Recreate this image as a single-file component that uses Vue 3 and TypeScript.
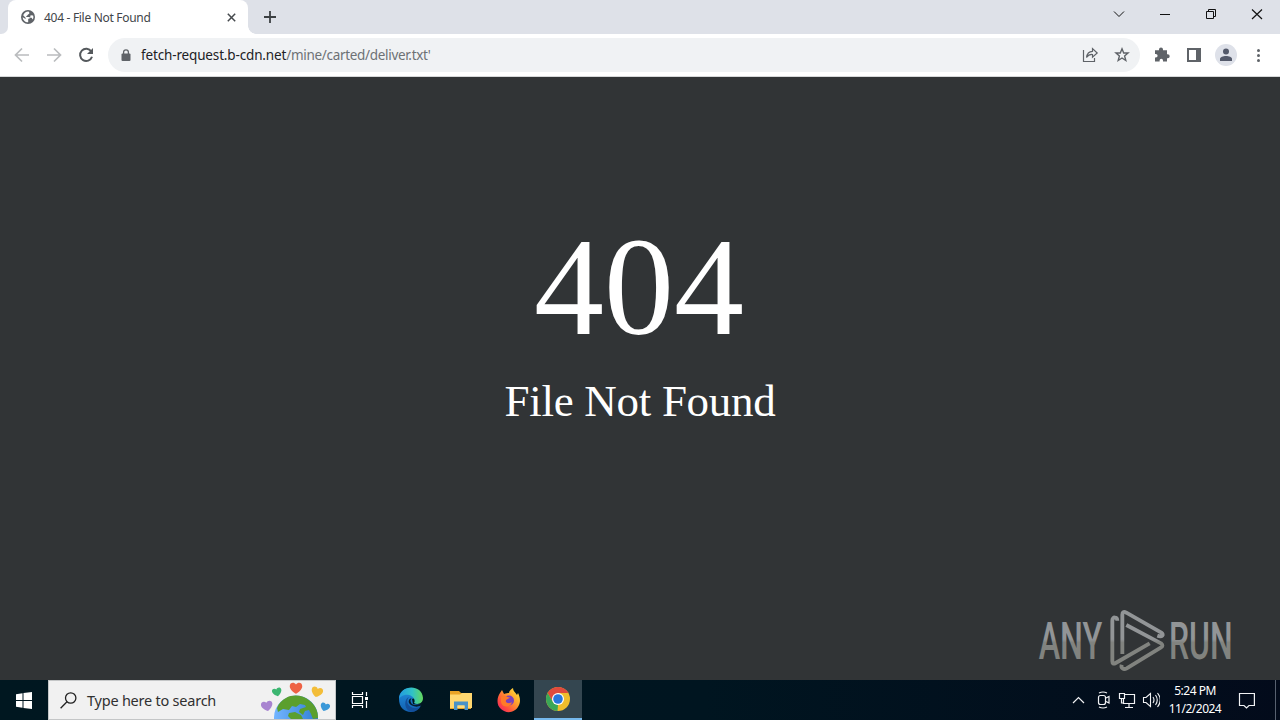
<script setup lang="ts">
interface Heart { x: number; y: number; r: number; s: number; c: string }
const title = '404 - File Not Found'
const hearts: Heart[] = [
  { x: 12, y: 28, r: -12, s: 1.15, c: '#a884d0' },
  { x: 22, y: 14, r: -14, s: 0.95, c: '#3cb671' },
  { x: 41, y: 10, r: 0, s: 1.25, c: '#ee6245' },
  { x: 62, y: 14, r: 14, s: 1.15, c: '#f3bd38' },
  { x: 70, y: 29, r: 18, s: 0.95, c: '#3b98d8' },
]
</script>

<template>
  <div class="screen">
    <header class="tabs">
      <div class="edge"></div>
      <div class="tab">
        <svg class="globe" width="14" height="14" viewBox="0 0 14 14">
          <circle cx="7" cy="7" r="7" fill="#5f6368" />
          <path d="M7.500 1.600C9 3 8.600 4.200 7 4.500 6.600 5.800 5 5.600 5.200 7H8.500C9.300 7.800 8.700 8.800 7.200 8.800V12.300C4 12.200 1.800 10 1.700 7.200L4.200 8.800 5 8.300 2.200 5.300C3.100 3 5 1.800 7.500 1.600ZM9.600 5.300 12.100 5.600C12.600 7 12.400 8.600 11.800 9.500L10.600 7.700H9Z" fill="#fff" />
        </svg>
        <span class="title">{{ title }}</span>
        <svg class="close" width="9" height="9" viewBox="0 0 9 9"><path d="M.8.8 8.200 8.200M8.200.8.8 8.200" stroke="#45494d" stroke-width="1.500" /></svg>
      </div>
      <div class="newtab"><svg width="12" height="12" viewBox="0 0 12 12"><path d="M6 0V12M0 6H12" stroke="#3c4043" stroke-width="1.800" /></svg></div>
      <div class="winbtns">
        <svg width="184" height="34" viewBox="0 0 184 34" fill="none" stroke="#111" stroke-width="1">
          <path d="M18 11.500 23 16.500 28 11.500" />
          <path d="M64 14.500H74" />
          <path d="M110.500 11.500H117.500V18.500H110.500ZM112.500 11V9.500H119.500V16.500H118" />
          <path d="M156 9.500 166 19M166 9.500 156 19" stroke-width="1.200" />
        </svg>
      </div>
    </header>
    <div class="toolbar">
      <svg class="nav" width="108" height="42" viewBox="0 0 108 42" fill="none" stroke="#babcbe" stroke-width="1.700">
        <path d="M29 21H16M22 14.500 15.500 21 22 27.500" />
        <path d="M47 21H60M54 14.500 60.500 21 54 27.500" />
        <path d="M91.300 17.500A6.100 6.100 0 1 0 92 22.800" stroke="#54585c" stroke-width="2" />
        <path d="M93 14V20H87Z" fill="#54585c" stroke="none" />
      </svg>
      <div class="omni">
        <svg class="lock" width="10" height="13" viewBox="0 0 10 13"><rect x=".5" y="4.500" width="9" height="7.500" rx="1" fill="#5f6368" /><path d="M2.600 5V3.300a2.400 2.400 0 0 1 4.800 0V5" fill="none" stroke="#5f6368" stroke-width="1.300" /></svg>
        <span class="url"><b>fetch-request.b-cdn.net</b><i>/mine/carted/deliver.txt'</i></span>
        <svg class="acts" width="60" height="34" viewBox="0 0 60 34" fill="none" stroke="#5f6368" stroke-width="1.200">
          <path d="M3.500 12V23.500H14.500V20" />
          <path d="M6.500 19.500C7 15.500 9 13.500 12.500 13.300V10.600L17.200 15 12.500 19.200V16.500C10 16.300 8 17.300 6.500 19.500Z" />
          <path d="M42 10.800 43.700 15H48L44.600 17.900 45.800 22.500 42 20 38.200 22.500 39.400 17.900 36 15H40.300Z" stroke-width="1.400" />
        </svg>
      </div>
      <svg class="right" width="140" height="42" viewBox="0 0 140 42">
        <path d="M15 17h4v-.8a2 2 0 0 1 4 0V17h4v4h.7a2 2 0 0 1 0 4H27v3.200h-4v-1a1.700 1.700 0 0 0-3.400 0v1H15v-4h.8a1.800 1.800 0 0 0 0-3.600H15Z" transform="translate(0 -.700)" fill="#5f6368" />
        <path d="M47 14H61V28H47ZM49 16V26H56V16Z" fill="#5f6368" fill-rule="evenodd" />
        <circle cx="86" cy="21" r="11" fill="#dee1e9" /><circle cx="86" cy="17.500" r="3" fill="#53596a" />
        <path d="M80 27V25c0-2 3-3 6-3s6 1 6 3v2Z" fill="#53596a" />
        <g fill="#5f6368"><circle cx="118.500" cy="16.500" r="1.500" /><circle cx="118.500" cy="21.500" r="1.500" /><circle cx="118.500" cy="26.500" r="1.500" /></g>
      </svg>
    </div>
    <main class="page">
      <h1>404</h1>
      <h2>File Not Found</h2>
      <svg class="mark" width="230" height="80" viewBox="0 0 690 240">
        <defs>
          <linearGradient id="mg" x1="0" y1="0" x2="0" y2="240" gradientUnits="userSpaceOnUse"><stop offset=".49" stop-color="#929597" /><stop offset=".53" stop-color="#81837f" /></linearGradient>
          <linearGradient id="mt" x1="0" y1="-178" x2="0" y2="62" gradientUnits="userSpaceOnUse"><stop offset=".49" stop-color="#929597" /><stop offset=".53" stop-color="#81837f" /></linearGradient>
        </defs>
        <g fill="url(#mt)" font-family="Roboto, sans-serif" font-size="154" font-weight="500">
          <text transform="translate(56 178) scale(.64 1)" textLength="298" lengthAdjust="spacingAndGlyphs">ANY</text>
          <text transform="translate(447 178) scale(.6 1)" textLength="318" lengthAdjust="spacingAndGlyphs">RUN</text>
        </g>
        <g fill="none" stroke="url(#mg)" stroke-width="11.500" stroke-linejoin="round">
          <path d="M292 62C292 50 277 49 277 62V184Q277 195 287 189L389 130" />
          <path d="M307 162V44Q307 32 319 38L424 98C433 104 427 112 412 107" />
          <path d="M319 75 423 130Q432 137 422 143L320 205C311 210 302 205 305 194" />
        </g>
      </svg>
    </main>
    <footer class="taskbar">
      <div class="start"><svg width="16" height="17" viewBox="0 0 16 17" fill="#fff"><path d="M0 2.300 6.500 1.300V8H0ZM7.500 1.100 16 0V8H7.500ZM0 9H6.500V15.700L0 14.700ZM7.500 9H16V17L7.500 15.900Z" /></svg></div>
      <div class="search">
        <svg class="mag" width="17" height="17" viewBox="0 0 17 17" fill="none" stroke="#222" stroke-width="1.300"><circle cx="10.700" cy="6" r="5.200" /><path d="M7 9.800.6 16.200" /></svg>
        <span class="ph">Type here to search</span>
        <svg class="art" width="80" height="38" viewBox="0 3 80 38">
          <defs><linearGradient id="eg"><stop stop-color="#73b5ff" /><stop offset="1" stop-color="#317fd5" /></linearGradient></defs>
          <circle cx="41" cy="39.500" r="22" fill="url(#eg)" />
          <path d="M31 20C38 16 48 17 55 23 61 28 63 34 63 40L58 41 56 36 54 32 50 33 48 37 44 34 45 31 51 29 50 27 45 26 41 29 37 28 34 32 28 31 23 34 22 30C24 25 27 22 31 20ZM34 35 40 34 46 37 48 41H36L33 38Z" fill="#5b9f2d" />
          <path v-for="h in hearts" :key="h.c" d="M0 4.500C-2 3.500-5 1-5-1.500-5-4.500-1.500-5 0-2.800 1.500-5 5-4.500 5-1.500 5 1 2 3.500 0 4.500Z" :fill="h.c" :transform="`translate(${h.x} ${h.y}) rotate(${h.r}) scale(${h.s})`" />
        </svg>
      </div>
      <div class="app view"><svg width="18" height="18" viewBox="0 0 18 18" fill="none" stroke="#fff" stroke-width="1.200"><path d="M1.500 1V3.500H11.500V1M1.500 17V14.500H11.500V17M1.500 5.500H11.500V12.500H1.500ZM15.500 1V5M15.500 10V17" /><path d="M14 6H17V9H14Z" fill="#fff" stroke="none" /></svg></div>
      <div class="app edgeapp"><svg width="26" height="26" viewBox="0 0 26 26">
        <defs>
          <linearGradient id="e1"><stop stop-color="#229ae0" /><stop offset=".55" stop-color="#30c1c7" /><stop offset="1" stop-color="#64d95c" /></linearGradient>
          <linearGradient id="e2" x1="0" y1="0" x2="0" y2="1"><stop stop-color="#2290df" /><stop offset="1" stop-color="#1260b0" /></linearGradient>
        </defs>
        <path d="M1 12C1 5 6 1 13 1L20 10 14 12 15 17 23 18C21 22 17 25 13 25 6 25 1 20 1 12Z" fill="url(#e2)" />
        <path d="M1 12C2-3 24-3 25 11 25 17 19 18 16 16 18 13 15 9 11 8 6 7 2 10 1 12Z" fill="url(#e1)" />
        <path d="M11 10C7 14 10 21 17 21 20 21 22 20 23 19 20 24 15 26 11 24 6 21 6 12 11 10Z" fill="#134f9b" />
        <path d="M14 11.500C12 12 12 15 14 17 17 19 22 18 23.500 16.500L23.500 18.500C18 21 13 19 11 16 10 13 12 11 14 11.500Z" fill="#071a2a" />
      </svg></div>
      <div class="app files"><svg width="22" height="20" viewBox="0 0 22 20"><path d="M0 1H9L11 3H21V19H0Z" fill="#e9a325" /><path d="M0 4.500H10L12 3H22V18H0Z" fill="#ffd76f" /><path d="M4 11.500H18V20H14.500V15.500H7.500V20H4Z" fill="#4892c8" /><path d="M7.500 15.500H14.500V18H7.500Z" fill="#ffdc7c" /></svg></div>
      <div class="app fox"><svg width="24" height="25" viewBox="0 0 24 25">
        <defs><linearGradient id="ff" x1="1" y1="0" x2="0" y2="1"><stop stop-color="#fff13e" /><stop offset=".38" stop-color="#ffa32d" /><stop offset=".7" stop-color="#ff503d" /><stop offset="1" stop-color="#ed176f" /></linearGradient></defs>
        <path d="M3 5 5 2 7 6C9 5 11 5 12 5 12 3 14 1 16 0 16 3 18 4 20 7L21 5C23 9 24 14 21.500 18 18 25 9 26 4 21-1 17 0 9 3 5Z" fill="url(#ff)" />
        <circle cx="12" cy="12.500" r="5" fill="#7941bd" /><path d="M4 9C8 6 9 9 13 9.500 12 11 8 11 9 14 11 16 14 15 15 14 14 20 5 20 4 14Z" fill="#ff7a28" />
      </svg></div>
      <div class="app active"><svg width="24" height="24" viewBox="0 0 24 24"><circle cx="12" cy="12" r="12" fill="#efbd2c" /><path d="M1.600 6A12 12 0 0 1 22.400 6H12L7 15Z" fill="#df4a3d" /><path d="M1.600 6 7 15 12 18 11.500 24A12 12 0 0 1 1.600 6Z" fill="#3aa757" /><circle cx="12" cy="12" r="6" fill="#fff" /><circle cx="12" cy="12" r="4.800" fill="#2876dc" /></svg></div>
      <div class="tray">
        <svg width="96" height="40" viewBox="0 0 96 40" fill="none" stroke="#f1f2f4" stroke-width="1.200">
          <path d="M9 23 14.500 17.500 20 23" />
          <rect x="34.500" y="15.500" width="7" height="9" rx="2" /><path d="M42 18 45 16.500V23L42 21.500M35 13Q39 11 43 13M35 27Q39 29 43 27" />
          <path d="M61 14.500H70.500V23.500H59.500V19M65 24V27M61 27.500H69M55.500 13.500H60.500V18.500H55.500ZM57.500 19V23H60" />
          <path d="M79.500 17.500H82L86.500 13.500V26.500L82 22.500H79.500ZM89 17Q91 20 89 23M91.500 15Q95 20 91.500 25M93.500 13Q99 20 93.500 27" stroke-width="1.100" />
        </svg>
      </div>
      <div class="clock"><span class="time">5:24 PM</span><span class="date">11/2/2024</span></div>
      <svg class="note" width="17" height="17" viewBox="0 0 17 17" fill="none" stroke="#f1f2f4" stroke-width="1.200"><path d="M1.500 1.500H16.400V13.500H11L8.500 16 6 13.500H1.500Z" /></svg>
      <div class="desk"></div>
    </footer>
  </div>
</template>

<style>
body { overflow: hidden; }
</style>

<style scoped>
.screen { width: 1280px; height: 720px; display: flex; flex-direction: column; font-family: "Noto Sans", "Open Sans", sans-serif; background: #313436; overflow: hidden; }
svg { display: block; flex: none; }
.tabs { height: 34px; display: flex; background: #dee1e8; flex: none; }
.edge { width: 8px; background: #fff; flex: none; }
.edge::before { content: ""; display: block; height: 34px; background: #dee1e8; border-bottom-right-radius: 7px; }
.tab { width: 240px; box-sizing: border-box; background: #fff; border-radius: 8px 8px 0 0; display: flex; align-items: center; padding: 0 12px 0 13px; }
.title { margin-left: 9px; font-size: 12px; color: #414549; letter-spacing: -.3px; white-space: nowrap; flex: 1; }
.newtab { flex: 1; display: flex; align-items: center; padding-left: 16px; background: radial-gradient(circle at 8px 0, transparent 7.5px, #fff 8px) 0 100% / 8px 8px no-repeat; }
.winbtns { width: 184px; }
.toolbar { height: 42px; background: #fff; display: flex; flex: none; border-bottom: 1px solid #d6d8d9; }
.omni { width: 1032px; height: 34px; margin-top: 4px; border-radius: 17px; background: #f0f2f4; display: flex; align-items: center; flex: none; }
.lock { margin-left: 13px; }
.url { margin-left: 10px; font-size: 13.5px; white-space: nowrap; flex: 1; line-height: 34px; }
.url b { font-weight: 400; color: #202124; letter-spacing: -.15px; }
.url i { font-style: normal; color: #6d7175; letter-spacing: -.31px; }
.page { flex: 1; display: flex; flex-direction: column; align-items: center; color: #fff; font-family: "Liberation Serif", serif; position: relative; background: #313436; }
h1 { font-size: 140px; font-weight: 400; line-height: 160px; margin: 130px 0 0; padding-right: 2px; }
h2 { font-size: 45px; font-weight: 400; line-height: 52px; margin: 8px 0 0; letter-spacing: -.3px; }
.mark { position: absolute; left: 1020px; top: 523px; overflow: visible; }
.taskbar { height: 40px; display: flex; align-items: center; background: linear-gradient(90deg, #001720, #001520 55%, #030b1b); flex: none; }
.start { width: 48px; display: flex; justify-content: center; }
.search { width: 288px; height: 40px; box-sizing: border-box; background: #f1f1f1; border: 1px solid #c4c6c7; display: flex; align-items: center; overflow: hidden; }
.mag { margin-left: 11px; }
.ph { margin-left: 10px; font-size: 14.5px; color: #303030; flex: 1; white-space: nowrap; letter-spacing: -.23px; }
.app { height: 40px; display: flex; align-items: center; justify-content: center; }
.view { width: 48px; }
.edgeapp { width: 54px; }
.files { width: 45px; }
.fox { width: 51px; }
.active { width: 48px; box-sizing: border-box; background: #344650; border-bottom: 2px solid #76b9ed; }
.tray { margin-left: auto; }
.clock { width: 70px; display: flex; flex-direction: column; align-items: center; color: #fff; font-size: 12px; line-height: 18px; letter-spacing: -.5px; }
.note { margin-left: 8px; }
.desk { width: 1px; height: 40px; background: #586170; margin-left: 20px; margin-right: 4px; }
</style>
